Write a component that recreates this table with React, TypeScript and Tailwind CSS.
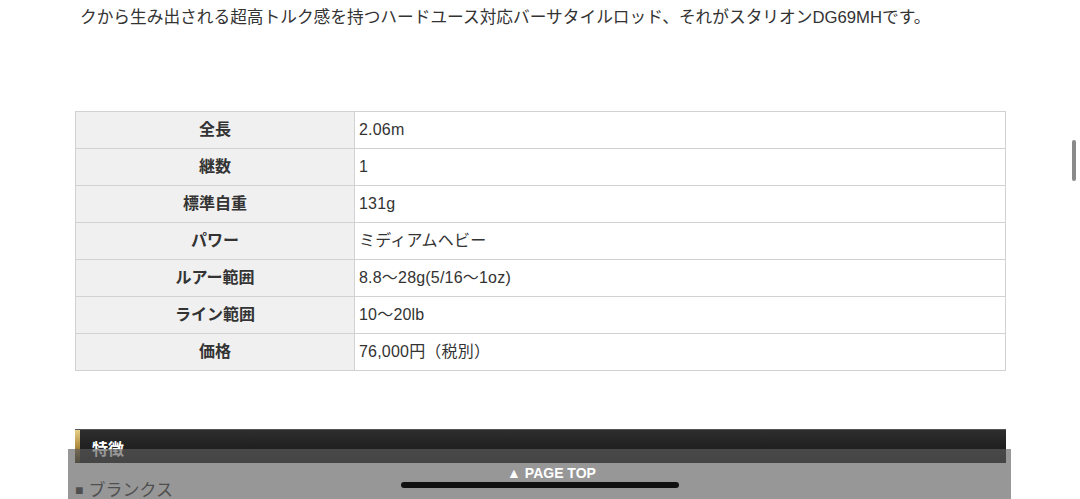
const specs: [string, string][] = [
  ["全長", "2.06m"],
  ["継数", "1"],
  ["標準自重", "131g"],
  ["パワー", "ミディアムヘビー"],
  ["ルアー範囲", "8.8〜28g(5/16〜1oz)"],
  ["ライン範囲", "10〜20lb"],
  ["価格", "76,000円（税別）"],
];

export default function App() {
  return (
    <div
      className="relative w-[1080px] h-[499px] overflow-hidden bg-white text-[#333]"
      style={{ fontFamily: '"Liberation Sans", "Noto Sans CJK JP", sans-serif' }}
    >
      <div className="-mt-[21px] px-[75px]">
        {/* intro text, first line scrolled off */}
        <p className="pl-[5px] text-[16.7px] leading-[26px]">
          強靭なブランクスとグリップまで一体のパワー、高反発なバットと粘りのあるティップのバラン
          <br />
          クから生み出される超高トルク感を持つハードユース対応バーサタイルロッド、それがスタリオンDG69MHです。
        </p>

        <table className="mt-[80px] w-[931px] border-collapse text-[16px]">
          <tbody>
            {specs.map(([k, v]) => (
              <tr key={k} className="h-[37px]">
                <th className="w-[279px] border border-[#d2d2d2] bg-[#f0f0f0] text-center font-bold">{k}</th>
                <td className="border border-[#d2d2d2] pl-[4px] tracking-[0.2px]">{v}</td>
              </tr>
            ))}
          </tbody>
        </table>

        <div className="mt-[58px] flex h-[34px] w-[931px] border-t border-[#555] bg-gradient-to-b from-[#2e2e2e] to-[#151515]">
          <div className="w-[5px] bg-gradient-to-b from-[#e6cf86] via-[#b08d3e] to-[#3a2e14]" />
          <span className="pl-[12px] pt-[8px] text-[16px] font-bold text-white">特徴</span>
        </div>

        <div className="mt-[15px] flex items-center gap-[5px] text-[17px] text-[#333]">
          <span className="text-[14px]">■</span>
          <span>ブランクス</span>
        </div>
      </div>

      {/* page top overlay */}
      <div className="absolute left-[68px] top-[449px] flex h-[50px] w-[943px] justify-center bg-[#606060]/65 pl-[24px]">
        <span className="pt-[15px] text-[14px] font-bold leading-[18px] text-white">▲ PAGE TOP</span>
      </div>

      {/* home indicator */}
      <div className="absolute left-[401px] top-[482px] h-[6px] w-[278px] rounded-full bg-[#111]" />

      {/* scroll indicator */}
      <div className="absolute left-[1072px] top-[140px] h-[41px] w-[4px] rounded-full bg-[#8a8a8a]" />
    </div>
  );
}
